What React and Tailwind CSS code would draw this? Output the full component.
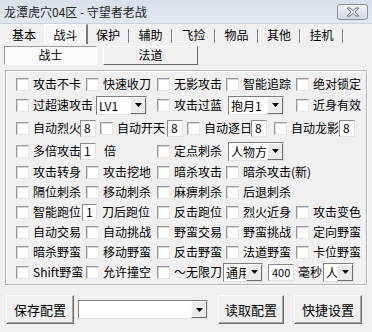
const cjk = { fontFamily: '"Noto Sans CJK SC", "Noto Sans", sans-serif' };

const Check = () => (
  <span className="inline-block w-[13px] h-[13px] shrink-0 bg-white border border-t-[#999999] border-l-[#999999] border-b-[#e6e6e6] border-r-[#e6e6e6] shadow-[inset_1px_1px_0_#d6d6d6]" />
);

const Opt = ({ w, label }) => (
  <div className={`${w} flex items-center gap-[4px] shrink-0 overflow-hidden whitespace-nowrap`}>
    <Check />
    <span>{label}</span>
  </div>
);

const Edit = ({ w, value, small }) => (
  <div
    className={`${w} h-[17px] shrink-0 bg-white border border-t-[#8a8a8a] border-l-[#8a8a8a] border-b-[#e2e2e2] border-r-[#e2e2e2] flex items-center pl-[3px] leading-none ${small ? 'text-[11px]' : 'text-[12px]'}`}
  >
    {value}
  </div>
);

const Arrow = () => (
  <svg width="7" height="4" viewBox="0 0 7 4">
    <path d="M0 0h7L3.5 4z" fill="#000" />
  </svg>
);

const Combo = ({ w, value }) => (
  <div className={`${w} h-[19px] shrink-0 bg-white border border-t-[#7e7e7e] border-l-[#7e7e7e] border-b-[#e0e0e0] border-r-[#e0e0e0] flex`}>
    <span className="flex-1 overflow-hidden whitespace-nowrap pl-[2px] leading-[17px]">{value}</span>
    <span className="w-[16px] bg-[#ececec] border border-t-[#fafafa] border-l-[#fafafa] border-b-[#6f6f6f] border-r-[#6f6f6f] flex items-center justify-center">
      <Arrow />
    </span>
  </div>
);

const Btn = ({ w, label }) => (
  <div className={`${w} h-[29px] shrink-0 flex items-center justify-center bg-[#f0f0f0] border border-t-[#fbfbfb] border-l-[#fbfbfb] border-b-[#6a6a6a] border-r-[#6a6a6a] shadow-[inset_-1px_-1px_0_#a8a8a8] text-[13px]`}>
    {label}
  </div>
);

const tabs = [
  ['基本', 'w-[40px]'],
  ['战斗', 'w-[44px]'],
  ['保护', 'w-[40px]'],
  ['辅助', 'w-[41px]'],
  ['飞捡', 'w-[41px]'],
  ['物品', 'w-[41px]'],
  ['其他', 'w-[40px]'],
  ['挂机', 'w-[41px]'],
];

export default function App() {
  return (
    <div className="w-[372px] h-[332px] bg-[#f0f0f0] text-[12px] text-black overflow-hidden flex flex-col" style={cjk}>
      {/* title bar */}
      <div className="h-[24px] shrink-0 flex items-center justify-between pl-[4px] pr-[4px] bg-gradient-to-b from-[#d8e1eb] to-[#e2e8ef] border-b border-[#c9d2dc]">
        <span className="text-[12px] text-[#222]">龙潭虎穴04区 - 守望者老战</span>
        <div className="w-[31px] h-[16px] rounded-[3px] border border-[#8b9097] bg-gradient-to-b from-[#f2f4f7] to-[#d3d9e0] flex items-center justify-center">
          <svg width="14" height="10" viewBox="0 0 14 10">
            <path d="M1 1h3l3 2.5L10 1h3L9 5l4 4h-3L7 6.5 4 9H1l4-4z" fill="#eef2f6" stroke="#5b6470" strokeWidth="0.9" strokeLinejoin="round" />
          </svg>
        </div>
      </div>

      {/* tabs */}
      <div className="h-[20px] shrink-0 flex items-end pl-[4px]">
        {tabs.map(([t, w], i) =>
          i === 1 ? (
            <div key={t} className={`${w} h-[20px] flex items-start justify-center pt-[1px] bg-[#f7f7f7] border-l border-t border-[#ffffff] border-r-2 border-r-[#7a7a7a]`}>
              {t}
            </div>
          ) : (
            <div key={t} className="flex items-end">
              <div className={`${w} h-[18px] flex items-center justify-center`}>{t}</div>
              {i !== 0 ? (
                <span className="w-[2px] h-[14px] mb-[1px] border-l border-[#7a7a7a] border-r border-r-white" />
              ) : null}
            </div>
          )
        )}
      </div>

      {/* sub tabs */}
      <div className="h-[20px] shrink-0 flex items-center gap-[6px] pl-[4px] mt-[1px]">
        <div className="w-[93px] h-[19px] flex items-center justify-center bg-[#fafafa] border border-t-[#9a9a9a] border-l-[#9a9a9a] border-b-white border-r-white">
          战士
        </div>
        <div className="w-[95px] h-[19px] flex items-center justify-center bg-[#f0f0f0] border border-t-white border-l-white border-b-[#6a6a6a] border-r-[#6a6a6a]">
          法道
        </div>
      </div>

      {/* group box */}
      <div className="mt-[5px] ml-[5px] w-[362px] h-[215px] shrink-0 border border-[#b4b4b4] shadow-[1px_1px_0_#ffffff,inset_1px_1px_0_#ffffff] pl-[10px] pt-[3px] flex flex-col">
        <div className="h-[20px] flex items-center">
          <Opt w="w-[70px]" label="攻击不卡" />
          <Opt w="w-[71px]" label="快速收刀" />
          <Opt w="w-[69px]" label="无影攻击" />
          <Opt w="w-[70px]" label="智能追踪" />
          <Opt w="w-[66px]" label="绝对锁定" />
        </div>
        <div className="h-[22px] flex items-center">
          <Opt w="w-[80px]" label="过超速攻击" />
          <Combo w="w-[51px]" value="LV1" />
          <div className="w-[10px] shrink-0" />
          <Opt w="w-[71px]" label="攻击过蓝" />
          <Combo w="w-[56px]" value="抱月1" />
          <div className="w-[12px] shrink-0" />
          <Opt w="w-[66px]" label="近身有效" />
        </div>
        <div className="h-[24px] flex items-center">
          <Opt w="w-[64px]" label="自动烈火" />
          <Edit w="w-[16px]" value="8" />
          <div className="w-[4px] shrink-0" />
          <Opt w="w-[67px]" label="自动开天" />
          <Edit w="w-[16px]" value="8" />
          <div className="w-[4px] shrink-0" />
          <Opt w="w-[64px]" label="自动逐日" />
          <Edit w="w-[16px]" value="8" />
          <div className="w-[7px] shrink-0" />
          <Opt w="w-[65px]" label="自动龙影" />
          <Edit w="w-[16px]" value="8" />
        </div>
        <div className="h-[22px] flex items-center">
          <Opt w="w-[64px]" label="多倍攻击" />
          <Edit w="w-[16px]" value="1" />
          <span className="w-[61px] shrink-0 pl-[8px]">倍</span>
          <Opt w="w-[71px]" label="定点刺杀" />
          <Combo w="w-[56px]" value="人物方向" />
        </div>
        <div className="h-[20px] flex items-center">
          <Opt w="w-[70px]" label="攻击转身" />
          <Opt w="w-[71px]" label="攻击挖地" />
          <Opt w="w-[69px]" label="暗杀攻击" />
          <Opt w="w-[110px]" label="暗杀攻击(新)" />
        </div>
        <div className="h-[20px] flex items-center">
          <Opt w="w-[70px]" label="隔位刺杀" />
          <Opt w="w-[71px]" label="移动刺杀" />
          <Opt w="w-[69px]" label="麻痹刺杀" />
          <Opt w="w-[70px]" label="后退刺杀" />
        </div>
        <div className="h-[20px] flex items-center">
          <Opt w="w-[66px]" label="智能跑位" />
          <Edit w="w-[15px]" value="1" />
          <span className="w-[60px] shrink-0 pl-[5px] whitespace-nowrap overflow-hidden">刀后跑位</span>
          <Opt w="w-[69px]" label="反击跑位" />
          <Opt w="w-[70px]" label="烈火近身" />
          <Opt w="w-[66px]" label="攻击变色" />
        </div>
        <div className="h-[20px] flex items-center">
          <Opt w="w-[70px]" label="自动交易" />
          <Opt w="w-[71px]" label="自动挑战" />
          <Opt w="w-[69px]" label="野蛮交易" />
          <Opt w="w-[70px]" label="野蛮挑战" />
          <Opt w="w-[66px]" label="定向野蛮" />
        </div>
        <div className="h-[20px] flex items-center">
          <Opt w="w-[70px]" label="暗杀野蛮" />
          <Opt w="w-[71px]" label="移动野蛮" />
          <Opt w="w-[69px]" label="反击野蛮" />
          <Opt w="w-[70px]" label="法道野蛮" />
          <Opt w="w-[66px]" label="卡位野蛮" />
        </div>
        <div className="h-[20px] flex items-center">
          <Opt w="w-[70px]" label="Shift野蛮" />
          <Opt w="w-[71px]" label="允许撞空" />
          <Opt w="w-[66px]" label="～无限刀" />
          <Combo w="w-[40px]" value="通用" />
          <div className="w-[5px] shrink-0" />
          <Edit w="w-[26px]" value="400" small />
          <span className="w-[29px] shrink-0 pl-[4px]">毫秒</span>
          <Combo w="w-[31px]" value="人" />
        </div>
      </div>

      {/* bottom bar */}
      <div className="mt-[10px] pl-[6px] flex items-center">
        <Btn w="w-[68px]" label="保存配置" />
        <div className="w-[4px] shrink-0" />
        <Combo w="w-[130px]" value="" />
        <div className="w-[10px] shrink-0" />
        <Btn w="w-[66px]" label="读取配置" />
        <div className="w-[10px] shrink-0" />
        <Btn w="w-[68px]" label="快捷设置" />
      </div>
    </div>
  );
}
